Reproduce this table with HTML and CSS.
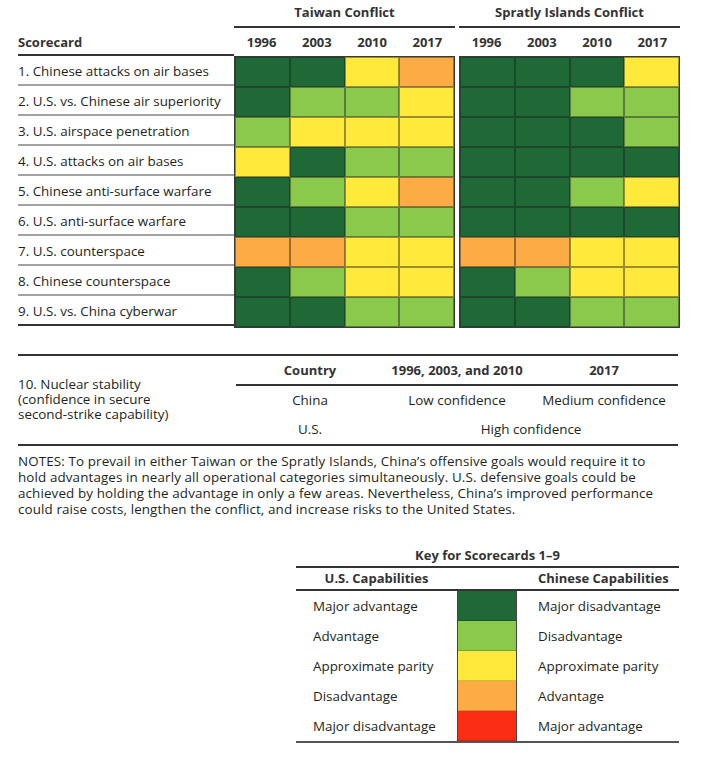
FILE: index.html
```html
<!DOCTYPE html>
<html>
<head>
<meta charset="utf-8">
<link rel="stylesheet" href="styles.css">
</head>
<body>
<div class="page">
  <section class="sc">
    <div class="sc-blank"></div>
    <div class="conflict c-tw">Taiwan Conflict</div>
    <div class="conflict c-sp">Spratly Islands Conflict</div>

    <div class="sc-title">Scorecard</div>
    <div class="years c-tw"><span>1996</span><span>2003</span><span>2010</span><span>2017</span></div>
    <div class="years c-sp"><span>1996</span><span>2003</span><span>2010</span><span>2017</span></div>

    <div class="labels">
      <div class="lab">1. Chinese attacks on air bases</div>
      <div class="lab">2. U.S. vs. Chinese air superiority</div>
      <div class="lab">3. U.S. airspace penetration</div>
      <div class="lab">4. U.S. attacks on air bases</div>
      <div class="lab">5. Chinese anti-surface warfare</div>
      <div class="lab">6. U.S. anti-surface warfare</div>
      <div class="lab">7. U.S. counterspace</div>
      <div class="lab">8. Chinese counterspace</div>
      <div class="lab">9. U.S. vs. China cyberwar</div>
    </div>

    <div class="block c-tw">
      <i class="dg"></i><i class="dg"></i><i class="ye"></i><i class="or"></i>
      <i class="dg"></i><i class="lg"></i><i class="lg"></i><i class="ye"></i>
      <i class="lg"></i><i class="ye"></i><i class="ye"></i><i class="ye"></i>
      <i class="ye"></i><i class="dg"></i><i class="lg"></i><i class="lg"></i>
      <i class="dg"></i><i class="lg"></i><i class="ye"></i><i class="or"></i>
      <i class="dg"></i><i class="dg"></i><i class="lg"></i><i class="lg"></i>
      <i class="or"></i><i class="or"></i><i class="ye"></i><i class="ye"></i>
      <i class="dg"></i><i class="lg"></i><i class="ye"></i><i class="ye"></i>
      <i class="dg"></i><i class="dg"></i><i class="lg"></i><i class="lg"></i>
    </div>

    <div class="block c-sp">
      <i class="dg"></i><i class="dg"></i><i class="dg"></i><i class="ye"></i>
      <i class="dg"></i><i class="dg"></i><i class="lg"></i><i class="lg"></i>
      <i class="dg"></i><i class="dg"></i><i class="dg"></i><i class="lg"></i>
      <i class="dg"></i><i class="dg"></i><i class="dg"></i><i class="dg"></i>
      <i class="dg"></i><i class="dg"></i><i class="lg"></i><i class="ye"></i>
      <i class="dg"></i><i class="dg"></i><i class="dg"></i><i class="dg"></i>
      <i class="or"></i><i class="or"></i><i class="ye"></i><i class="ye"></i>
      <i class="dg"></i><i class="lg"></i><i class="ye"></i><i class="ye"></i>
      <i class="dg"></i><i class="dg"></i><i class="lg"></i><i class="lg"></i>
    </div>
  </section>

  <section class="nuke">
    <div class="nuke-label">10. Nuclear stability<br>(confidence in secure<br>second-strike capability)</div>
    <div class="nh">Country</div>
    <div class="nh">1996, 2003, and 2010</div>
    <div class="nh">2017</div>
    <div class="nc nr1">China</div>
    <div class="nc nr1">Low confidence</div>
    <div class="nc nr1">Medium confidence</div>
    <div class="nc nr2">U.S.</div>
    <div class="nc nr2 span2">High confidence</div>
  </section>

  <p class="notes">NOTES: To prevail in either Taiwan or the Spratly Islands, China’s offensive goals would require it to<br>hold advantages in nearly all operational categories simultaneously. U.S. defensive goals could be<br>achieved by holding the advantage in only a few areas. Nevertheless, China’s improved performance<br>could raise costs, lengthen the conflict, and increase risks to the United States.</p>

  <div class="key-wrap">
    <section class="key">
      <div class="key-title">Key for Scorecards 1–9</div>
      <div class="key-grid">
        <div class="kh kh-us">U.S. Capabilities</div>
        <div class="kh"></div>
        <div class="kh kh-cn">Chinese Capabilities</div>

        <div class="kl">Major advantage</div><div class="sw dg"></div><div class="kr">Major disadvantage</div>
        <div class="kl">Advantage</div><div class="sw lg"></div><div class="kr">Disadvantage</div>
        <div class="kl">Approximate parity</div><div class="sw ye"></div><div class="kr">Approximate parity</div>
        <div class="kl">Disadvantage</div><div class="sw or"></div><div class="kr">Advantage</div>
        <div class="kl">Major disadvantage</div><div class="sw rd"></div><div class="kr">Major advantage</div>
      </div>
    </section>
  </div>
</div>
</body>
</html>
```
FILE: styles.css
```css
* { box-sizing: border-box; }
html, body { margin: 0; padding: 0; background: #fff; }
body {
  font-family: "Open Sans", "Noto Sans", sans-serif;
  font-size: 13.4px;
  color: #231f20;
}
.page { padding: 0 0 0 18px; width: 712px; }

.dg { background: #1e6935; }
.lg { background: #8bc94c; }
.ye { background: #ffe93b; }
.or { background: #fdab45; }
.rd { background: #fc2d15; }

/* Scorecard */
.sc {
  display: grid;
  grid-template-columns: 216px 221px 4px 221px;
  grid-template-rows: 28px 28px 272px;
}
.c-tw { grid-column: 2; }
.c-sp { grid-column: 4; }
.sc-blank { grid-column: 1; }
.conflict {
  font-weight: 700;
  font-size: 13px;
  text-align: center;
  line-height: 24px;
  border-bottom: 2px solid #333;
  color: #333;
}
.sc-title {
  grid-column: 1;
  font-weight: 700;
  font-size: 13px;
  line-height: 26px;
  border-bottom: 2px solid #333;
  color: #333;
  padding-top: 1px;
}
.years {
  display: grid;
  grid-template-columns: repeat(4, 1fr);
  font-weight: 700;
  font-size: 13px;
  color: #333;
  text-align: center;
  line-height: 26px;
  padding-top: 1px;
}
.labels { grid-column: 1; grid-row: 3; }
.lab {
  height: 30px;
  line-height: 26px;
  padding-top: 2px;
  border-bottom: 2px solid #a3a3a3;
  white-space: nowrap;
}
.lab:last-child { border-bottom-color: #333; }

.block {
  grid-row: 3;
  display: grid;
  grid-template-columns: repeat(4, 1fr);
  grid-template-rows: repeat(9, 30px);
  border: 1px solid #3a3a3a;
  height: 272px;
}
.block i {
  display: block;
  border: 1px solid rgba(30, 30, 30, 0.45);
}

/* Nuclear */
.nuke {
  margin-top: 26px;
  width: 660px;
  display: grid;
  grid-template-columns: 218px 148px 146px 148px;
  grid-template-rows: 30px 28px 30px;
  border-top: 2px solid #333;
  border-bottom: 2px solid #333;
}
.nuke-label {
  grid-column: 1;
  grid-row: 1 / 4;
  align-self: center;
  line-height: 15px;
  padding-bottom: 1px;
}
.nh {
  font-weight: 700;
  font-size: 13px;
  color: #333;
  text-align: center;
  line-height: 28px;
  border-bottom: 2px solid #333;
}
.nc { text-align: center; line-height: 28px; }
.nr2 { line-height: 30px; }
.span2 { grid-column: 3 / 5; }

/* Notes */
.notes {
  margin: 7px 0 0 0;
  line-height: 16px;
  letter-spacing: 0.12px;
  white-space: nowrap;
}

/* Key */
.key-wrap {
  margin-top: 28px;
  width: 661px;
  display: flex;
  justify-content: flex-end;
}
.key { width: 383px; }
.key-title {
  font-weight: 700;
  font-size: 13px;
  color: #333;
  text-align: center;
  line-height: 21px;
  border-bottom: 2px solid #333;
}
.key-grid {
  display: grid;
  grid-template-columns: 161px 60px 162px;
  grid-template-rows: 23px repeat(5, 30px);
  border-bottom: 2px solid #555;
}
.kh {
  font-weight: 700;
  font-size: 13px;
  color: #333;
  line-height: 21px;
  border-bottom: 2px solid #333;
}
.kh-us { text-align: center; }
.kh-cn { padding-left: 21px; }
.kl { padding-left: 17px; line-height: 30px; }
.kr { padding-left: 21px; line-height: 30px; }
.sw {
  border-left: 1px solid #444;
  border-right: 1px solid #444;
  box-shadow: inset 0 -1px 0 rgba(0,0,0,0.18);
}
```
